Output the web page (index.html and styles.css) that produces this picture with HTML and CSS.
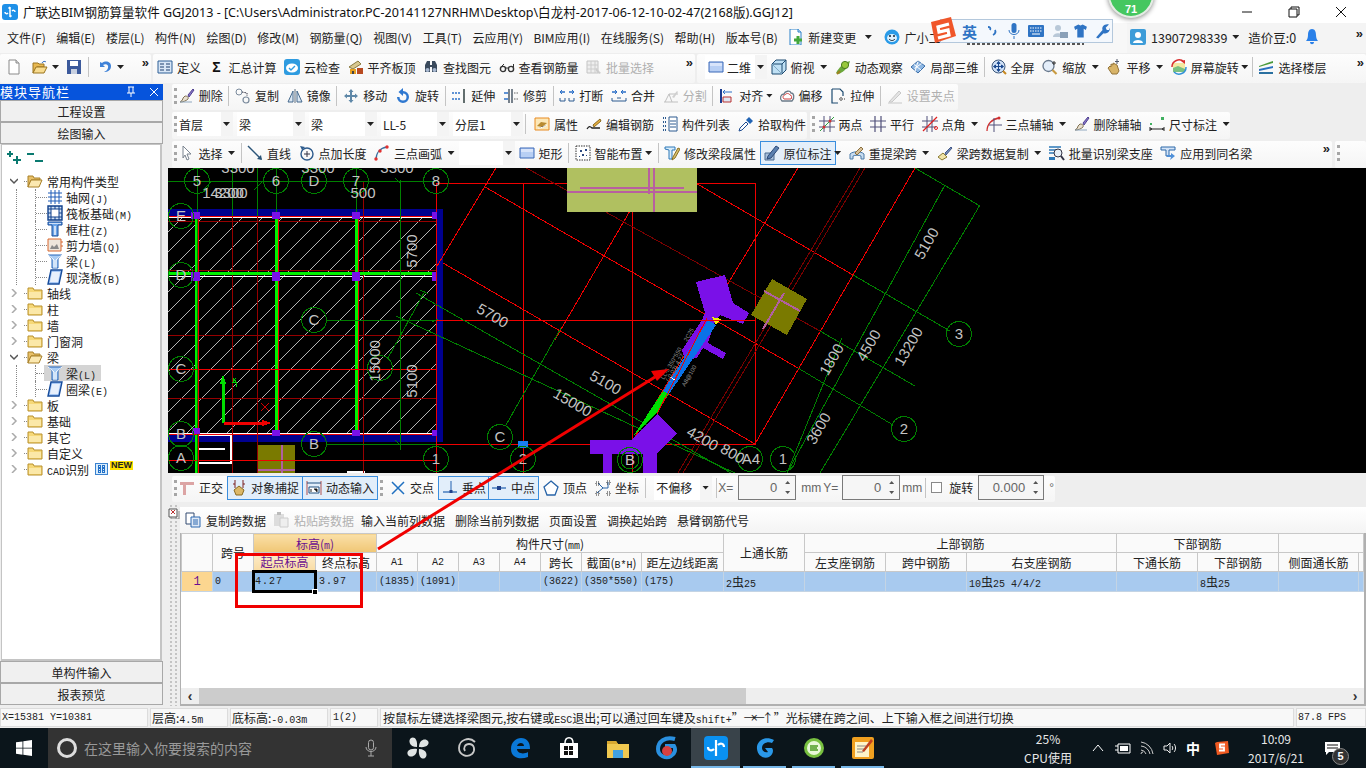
FILE: index.html
```html
<!DOCTYPE html>
<html>
<head>
<meta charset="UTF-8">
<title>广联达BIM钢筋算量软件 GGJ2013</title>
<link rel="stylesheet" href="styles.css">
</head>
<body>
<svg class="defs" xmlns="http://www.w3.org/2000/svg">
  <symbol id="new" viewBox="0 0 16 16"><path d="M3 1h7l3 3v11H3z" fill="#fff" stroke="#8a8a8a"/><path d="M10 1v3h3" fill="#ddd" stroke="#8a8a8a"/></symbol>
  <symbol id="change" viewBox="0 0 16 16"><path d="M2 0h8l3 3v13H2z" fill="#fff" stroke="#2a80c8"/><path d="M10 0v3h3" fill="#cfe4f6" stroke="#2a80c8"/><path d="M10 7v8M6 11h8" stroke="#44a83c" stroke-width="3"/></symbol>
  <symbol id="open" viewBox="0 0 16 16"><path d="M1 4h5l1 1h5v3H5L1 14z" fill="#e8b850" stroke="#9a7420"/><path d="M1 14l3-6h11l-3 6z" fill="#f8dc90" stroke="#9a7420"/><path d="M10 4c1-2 3-2 4-1" fill="none" stroke="#3a70c0"/></symbol>
  <symbol id="save" viewBox="0 0 16 16"><path d="M1 1h14v14H1z" fill="#3c5a9c"/><path d="M4 2h8v5H4z" fill="#fff"/><path d="M5 10h6v5H5z" fill="#c8d0e0"/></symbol>
  <symbol id="undo" viewBox="0 0 16 16"><path d="M3 3v5h5L6 6c3-2 6 0 5 3-.5 2-2 3-4 4 4 0 7-2 7-6C14 3 9 1 5 4z" fill="#3f82d8"/></symbol>
  <symbol id="def" viewBox="0 0 16 16"><path d="M1 2h14v12H1z" fill="#d8e6f6" stroke="#2c5f96"/><path d="M3 5h4M3 8h4M3 11h4M9 5h4M9 8h4M9 11h4" stroke="#1d3f6e"/></symbol>
  <symbol id="cloud" viewBox="0 0 16 16"><rect x="0" y="0" width="16" height="16" rx="3" fill="#2e9be0"/><ellipse cx="8" cy="9" rx="6" ry="4.5" fill="#fff"/><path d="M5 9l2 2 4-4" fill="none" stroke="#2e9be0" stroke-width="1.4"/></symbol>
  <symbol id="flush" viewBox="0 0 16 16"><path d="M1 8l9-6 3 3-8 5z" fill="#d8c890" stroke="#8a7a40"/><path d="M2 10h6v5H2z" fill="#e8a020"/><path d="M9 9h6v6H9z" fill="#b84a20"/><path d="M4 12h2v3H4z" fill="#444"/></symbol>
  <symbol id="find" viewBox="0 0 16 16"><path d="M2 6l2-4h3v4h2V2h3l2 4v7h-5V8H7v5H2z" fill="#3a4a5c"/><circle cx="4.5" cy="11" r="2" fill="#a8b8d0"/><circle cx="11.5" cy="11" r="2" fill="#a8b8d0"/></symbol>
  <symbol id="glass" viewBox="0 0 16 16"><circle cx="4" cy="10" r="2.6" fill="none" stroke="#333" stroke-width="1.4"/><circle cx="12" cy="10" r="2.6" fill="none" stroke="#333" stroke-width="1.4"/><path d="M6.5 9h3M2 8l3-3M14.5 8V5" stroke="#333"/></symbol>
  <symbol id="batch" viewBox="0 0 16 16"><path d="M1 2h11v12H1z" fill="#eee" stroke="#c4c4c4"/><path d="M1 6h11M1 10h11M5 2v12M9 2v12" stroke="#ccc"/><path d="M10 9l5 5-2 1-3-3z" fill="#ccc"/></symbol>
  <symbol id="rect" viewBox="0 0 16 16"><path d="M1 3h14v10H1z" fill="#b8cff4" stroke="#3a68b8"/><path d="M2 4h12v3H2z" fill="#d8e4fa"/></symbol>
  <symbol id="cube" viewBox="0 0 16 16"><path d="M1 5l4-4h10v10l-4 4H1z" fill="#bfe0f4" stroke="#1d4a70"/><path d="M1 5h10v10M11 5l4-4" fill="none" stroke="#1d4a70"/><path d="M1 5l10 10" stroke="#7ea8c4"/></symbol>
  <symbol id="orbit" viewBox="0 0 16 16"><path d="M1 14c3-6 8-10 14-12-1 5-5 10-11 13z" fill="#6aa83c"/><circle cx="10" cy="6" r="3.6" fill="#98c83c" stroke="#4a7a20"/><path d="M2 15l3-3" stroke="#a08020" stroke-width="2"/></symbol>
  <symbol id="local" viewBox="0 0 16 16"><path d="M1 8l7-6 7 5-7 7z" fill="#8fb8e4" stroke="#3c6ea8"/><path d="M4 5.500l7 5.500M8 2.500l-3 10M11.500 4.500l-7 5" stroke="#fff"/></symbol>
  <symbol id="full" viewBox="0 0 16 16"><circle cx="7.500" cy="7.500" r="6.500" fill="#cfe0f6" stroke="#3c587c"/><path d="M7.500 3v9M3 7.500h9M7.500 2.500l-1.500 2h3zM7.500 12.500l-1.500-2h3zM2.500 7.500l2-1.500v3zM12.500 7.500l-2-1.500v3z" stroke="#1c4a90" fill="#1c4a90"/><path d="M12 12l3 3" stroke="#c88a20" stroke-width="2"/></symbol>
  <symbol id="zoom" viewBox="0 0 16 16"><circle cx="6.500" cy="7" r="5.500" fill="#e4eefa" stroke="#68788c" stroke-width="1.300"/><path d="M10.500 11l4 4" stroke="#c89a40" stroke-width="2.200"/><path d="M12 2v4M10 4h4" stroke="#333"/></symbol>
  <symbol id="pan" viewBox="0 0 16 16"><path d="M2 9l2-2 1 1V5l2 1V4l2 1V5l2 1 1 3 1 3-2 3H6z" fill="#d8b468" stroke="#94743a"/><path d="M11 0v5M9 2.500h4" stroke="#50586a"/></symbol>
  <symbol id="screen" viewBox="0 0 16 16"><path d="M2 4h12v9H2z" fill="#f4e8a0"/><path d="M2 9l5-2 7 3v3H2z" fill="#7ac080"/><path d="M1 8a7 7 0 0 1 12-5" fill="none" stroke="#d83030" stroke-width="1.500"/><path d="M15 8a7 7 0 0 1-12 5" fill="none" stroke="#3090d8" stroke-width="1.500"/><path d="M10 2l4-1v4z" fill="#d83030"/></symbol>
  <symbol id="floor" viewBox="0 0 16 16"><path d="M1 7l14-5v2L1 8z" fill="#4a9a3c"/><path d="M1 10l14-3v2L1 12z" fill="#2a70c0"/><path d="M1 13h14v2H1z" fill="#2a70a0"/></symbol>
  <symbol id="brush" viewBox="0 0 16 16"><path d="M9 7l5-6 1 1-5 7z" fill="#8878c8" stroke="#504090"/><path d="M6 8c2 0 4 1 3 3-2 2-5 3-8 3 2-1 3-3 3-4z" fill="#e8e0d0" stroke="#807050"/><path d="M1 14h12" stroke="#90a8c0"/></symbol>
  <symbol id="copy" viewBox="0 0 16 16"><circle cx="4" cy="4" r="3" fill="none" stroke="#7a8a9c"/><circle cx="11" cy="12" r="3" fill="none" stroke="#7a8a9c" stroke-width="1.200"/><path d="M7 4l5 1v3" fill="none" stroke="#334" stroke-dasharray="1.500 1"/></symbol>
  <symbol id="mirror" viewBox="0 0 16 16"><path d="M8 1v14" stroke="#607080"/><path d="M6 3v11H1z" fill="#dce8f4" stroke="#44688c"/><path d="M10 3v11h5z" fill="#dce8f4" stroke="#44688c"/></symbol>
  <symbol id="move" viewBox="0 0 16 16"><path d="M8 1l2.500 3H9v3h3V5.500L15 8l-3 2.500V9H9v3h1.500L8 15l-2.500-3H7V9H4v1.500L1 8l3-2.500V7h3V4H5.500z" fill="#5f88a8"/></symbol>
  <symbol id="turn" viewBox="0 0 16 16"><path d="M8 3a6 6 0 1 1-6 6h2.500A3.500 3.500 0 1 0 8 5.500V8L3.500 4 8 0z" fill="#2f78d0"/></symbol>
  <symbol id="extend" viewBox="0 0 16 16"><path d="M13 1v14" stroke="#233" stroke-width="1.400"/><path d="M1 5h9M1 11h9" stroke="#2c70c8" stroke-width="1.400" stroke-dasharray="2 1"/></symbol>
  <symbol id="trim" viewBox="0 0 16 16"><path d="M6 1v14M9 1v14" stroke="#234" stroke-width="1.200"/><path d="M1 5h4M1 11h4" stroke="#2c70c8" stroke-width="1.400"/><path d="M11 5h4M11 11h4" stroke="#666" stroke-dasharray="1.500 1"/></symbol>
  <symbol id="break" viewBox="0 0 16 16"><path d="M1 4h5M10 4h5" stroke="#2c70c8" stroke-width="1.300"/><path d="M1 4l2-2M1 4l2 2M15 4l-2-2M15 4l-2 2" stroke="#2c70c8"/><path d="M1 10v3h5v-3M10 10v3h5v-3" fill="none" stroke="#2c5a90"/></symbol>
  <symbol id="merge" viewBox="0 0 16 16"><path d="M1 4h5M10 4h5" stroke="#2c70c8" stroke-width="1.300"/><path d="M6 4L4 2M6 4L4 6M10 4l2-2M10 4l2 2" stroke="#2c70c8"/><path d="M1 10v3h14v-3M6 10h4" fill="none" stroke="#2c5a90"/></symbol>
  <symbol id="split" viewBox="0 0 16 16"><path d="M1 14h14M2 14l4-8 3 8M6 6h9" fill="none" stroke="#c0c0c0"/><path d="M9 9l5-6 1 1-4 6z" fill="#d0d0d0"/></symbol>
  <symbol id="align" viewBox="0 0 16 16"><path d="M2 1v14" stroke="#1c3c90" stroke-width="2"/><path d="M4 4h9M4 4l2-2M4 4l2 2" stroke="#2c70c8"/><path d="M4 9h8v5H4z" fill="#e0e8f4" stroke="#b83030"/></symbol>
  <symbol id="offset" viewBox="0 0 16 16"><path d="M3 13c-3-3-1-7 2-7 1-3 6-4 7-1 3 0 4 5 1 8z" fill="#fff" stroke="#6a7a88" stroke-width="1.300"/><path d="M5 11c-2-2-.5-4 1-4 1-2 4-2 5 0 2 0 2 3 1 4z" fill="none" stroke="#d04040"/></symbol>
  <symbol id="stretch" viewBox="0 0 16 16"><path d="M2 1h8l3 3v4M2 1v14h6" fill="none" stroke="#1c4a70" stroke-width="1.200"/><path d="M9 11h6M11 9v4" stroke="#333" stroke-dasharray="1.500 1"/></symbol>
  <symbol id="grips" viewBox="0 0 16 16"><path d="M2 14L12 3l2 2L5 14z" fill="#e4e4e4" stroke="#c8c8c8"/><path d="M1 15h14" stroke="#c8c8c8"/></symbol>
  <symbol id="attr" viewBox="0 0 16 16"><path d="M1 2h14v12H1z" fill="#fce8b8" stroke="#e88a20"/><path d="M3 10l4-4 6 1-5 4z" fill="#b88a30"/><path d="M4 12c3 0 6-1 9-3" stroke="#fff"/></symbol>
  <symbol id="editbar" viewBox="0 0 16 16"><path d="M1 13c2-3 3-3 5-1h8" fill="none" stroke="#222" stroke-width="1.300"/><path d="M7 9l7-6 1 2-7 6z" fill="#e8b040" stroke="#8a6a20"/></symbol>
  <symbol id="list" viewBox="0 0 16 16"><path d="M1 2h3M1 6h3M1 10h3M1 14h3" stroke="#2c5a90" stroke-dasharray="1 1" stroke-width="2"/><path d="M7 1h8v14H7z" fill="#fff" stroke="#2c5a90"/><path d="M8 5h6M8 8h6M8 11h6" stroke="#2c5a90"/></symbol>
  <symbol id="pick" viewBox="0 0 16 16"><path d="M1 15l1-3 6-6 2 2-6 6z" fill="#fff" stroke="#1c4a90"/><path d="M8 4l3-3 4 4-3 3z" fill="#2264b4"/></symbol>
  <symbol id="twop" viewBox="0 0 16 16"><path d="M5 0v16M11 0v16M0 5h16M0 11h16" stroke="#50507a"/><path d="M1 15L15 1" stroke="#30a040"/><circle cx="5" cy="11" r="1.500" fill="#d03030"/><circle cx="11" cy="5" r="1.500" fill="#d03030"/></symbol>
  <symbol id="para" viewBox="0 0 16 16"><path d="M5 0v16M11 0v16M0 5h16M0 11h16" stroke="#50507a" stroke-width="1.200"/></symbol>
  <symbol id="angle" viewBox="0 0 16 16"><path d="M5 0v16M10 0v16M0 5h16M0 11h14" stroke="#50507a"/><path d="M1 15L15 1" stroke="#e02020" stroke-width="1.200"/><circle cx="14" cy="12" r="1.500" fill="none" stroke="#e02020"/></symbol>
  <symbol id="arcax" viewBox="0 0 16 16"><path d="M1 15C1 8 6 3 13 2" fill="none" stroke="#d03030" stroke-width="1.300"/><path d="M8 2v14M3 9h13" stroke="#50507a"/><circle cx="13" cy="2" r="1.500" fill="#d03030"/></symbol>
  <symbol id="dim" viewBox="0 0 16 16"><path d="M1 11v4M15 11v4M1 13h14" stroke="#222"/><path d="M1 13l2-1v2zM15 13l-2-1v2z" fill="#222"/><rect x="12" y="1" width="3" height="3" fill="#40b060"/><rect x="1" y="7" width="2" height="2" fill="#40b060"/></symbol>
  <symbol id="cursor" viewBox="0 0 16 16"><path d="M4 1l8 8H8l2 5-2 1-2-5-2 3z" fill="#fff" stroke="#7a8490"/></symbol>
  <symbol id="sline" viewBox="0 0 16 16"><path d="M1 1l13 13" stroke="#2a5478" stroke-width="1.500"/><path d="M15 15l-5-1 4-4z" fill="#2a5478"/></symbol>
  <symbol id="lenp" viewBox="0 0 16 16"><circle cx="8" cy="9" r="6" fill="none" stroke="#2c5a8c" stroke-width="1.400"/><path d="M8 6v6M5 9h6" stroke="#334"/><path d="M1 1l5 1-3 3z" fill="#2c5a8c"/></symbol>
  <symbol id="arc3" viewBox="0 0 16 16"><path d="M2 15C2 8 6 3 13 2" fill="none" stroke="#3a70a0" stroke-width="1.300"/><circle cx="2" cy="14" r="1.700" fill="#e03030"/><circle cx="6" cy="6" r="1.700" fill="#e03030"/><circle cx="13" cy="2" r="1.700" fill="#e03030"/></symbol>
  <symbol id="smart" viewBox="0 0 16 16"><path d="M1 1h14v14H1z" fill="#fff" stroke="#333" stroke-dasharray="1.500 1"/><path d="M5 5h2v2H5zM10 4h2v2h-2zM7 9h2v2H7zM4 11h1v1H4zM11 10h1v1h-1z" fill="#2c4a80"/></symbol>
  <symbol id="modi" viewBox="0 0 16 16"><path d="M1 2h10v3H8v9H5V5L1 4z" fill="#d8ecfa" stroke="#2c78b8"/><path d="M9 12l5-9 2 1-5 9-3 2z" fill="#d8c070" stroke="#8a7020"/></symbol>
  <symbol id="orig" viewBox="0 0 16 16"><path d="M1 8h9v7H1z" fill="#a8c0dc" stroke="#4a6a90"/><path d="M4 11l8-10 3 2-8 10-4 1z" fill="#5a80b0" stroke="#2c4a78"/></symbol>
  <symbol id="rext" viewBox="0 0 16 16"><path d="M1 14V9c3-3 11-3 14 0v5h-3V11c-2-1-6-1-8 0v3z" fill="#c8dcf0" stroke="#4a7aa8"/><path d="M6 8l6-6 2 2-6 6z" fill="#d8c098" stroke="#8a7040"/></symbol>
  <symbol id="span" viewBox="0 0 16 16"><path d="M1 12l5-4 4 4-5 3z" fill="#f0e4a8" stroke="#8a7a30"/><path d="M8 8l6-6 1 1-6 7z" fill="#7088b8" stroke="#445a88"/></symbol>
  <symbol id="bid" viewBox="0 0 16 16"><path d="M0 2h12M0 5h10M0 8h7" stroke="#2c78b8" stroke-width="1.300"/><path d="M0 12h6v3H0z" fill="#2c78b8"/><circle cx="9" cy="8" r="4" fill="#e8f0f8" stroke="#334"/><path d="M12 11l3 4" stroke="#334" stroke-width="2"/></symbol>
  <symbol id="apply" viewBox="0 0 16 16"><path d="M1 2h14v3H9v6H6V5L1 5z" fill="#d4e4f8" stroke="#2c68a8"/><path d="M11 8l4 3-5 4 1-3H7v-2h4z" fill="#5090d8"/></symbol>
  <symbol id="folder" viewBox="0 0 16 16"><path d="M1 3h5l1 2h8v9H1z" fill="#f6d878" stroke="#b8902c"/><path d="M2 7h12v6H2z" fill="#fbe8a8"/></symbol>
  <symbol id="fopen" viewBox="0 0 16 16"><path d="M1 3h5l1 2h6v2H4l-3 7z" fill="#e8c068" stroke="#a88028"/><path d="M1 14l3-7h11l-3 7z" fill="#fbe8b0" stroke="#a88028"/></symbol>
  <symbol id="tgrid" viewBox="0 0 16 16"><path d="M1 4h14M1 8h14M1 12h14M4 1v14M8 1v14M12 1v14" stroke="#1f5cb8"/></symbol>
  <symbol id="traft" viewBox="0 0 16 16"><path d="M1 1h14v14H1z" fill="#d0e0f4" stroke="#10408c" stroke-width="1.400"/><path d="M4 4h8v8H4z" fill="#fff" stroke="#10408c"/><path d="M1 4h3M1 8h3M1 12h3M12 4h3M12 8h3M12 12h3M4 1v3M8 1v3M12 1v3M4 12v3M8 12v3M12 12v3" stroke="#10408c"/></symbol>
  <symbol id="tcol" viewBox="0 0 16 16"><path d="M1 1h14v3h-4v11H5V4H1z" fill="#6aa4e8" stroke="#164c9c"/><path d="M2 2h12v1H2z" fill="#cfe0f8"/><path d="M7 5h2v9H7z" fill="#cfe0f8"/></symbol>
  <symbol id="twall" viewBox="0 0 16 16"><path d="M1 2h13v12H1z" fill="#eee6dc" stroke="#d86830"/><path d="M3 12l2-4 2 2 3-3 2 5z" fill="#8a8a8a"/><path d="M14 5h2M14 9h2" stroke="#d86830"/></symbol>
  <symbol id="tbeam" viewBox="0 0 16 16"><path d="M1 2h14l-4 4v9H5V6z" fill="#a8ccf4" stroke="#2464b8"/><path d="M1 2l6 5M15 2L9 7M7 7v8M9 7v8" stroke="#fff"/></symbol>
  <symbol id="tslab" viewBox="0 0 16 16"><path d="M4 1h11l-3 14H1z" fill="#a8c8f4" stroke="#164c9c" stroke-width="1.400"/><path d="M5 3h8l-2 10H3z" fill="#e8f0fc"/></symbol>
  <symbol id="ortho" viewBox="0 0 16 16"><path d="M1 2h14v3H7v10H4V5H1z" fill="#dca4a4"/></symbol>
  <symbol id="osnap" viewBox="0 0 16 16"><path d="M4 0v8M12 0v8M2 4h2M12 4h2" stroke="#7a2020"/><path d="M3 10l5-4 5 4-2 5H5z" fill="#dcb868" stroke="#8a6a20"/></symbol>
  <symbol id="dyn" viewBox="0 0 16 16"><path d="M1 1v14M15 1v14" stroke="#b05050"/><path d="M1 3h14" stroke="#205080"/><path d="M3 7h10v6H3z" fill="#fff" stroke="#205080"/><path d="M5 9v3M8 9h3v3" stroke="#222"/></symbol>
  <symbol id="cross" viewBox="0 0 16 16"><path d="M2 2l12 12M14 2L2 14" stroke="#2070c0" stroke-width="1.500"/></symbol>
  <symbol id="perp" viewBox="0 0 16 16"><path d="M1 12h14" stroke="#2060b0" stroke-width="1.200"/><path d="M9 1v11" stroke="#2060b0"/><rect x="7.500" y="10" width="3" height="3" fill="#20408c"/></symbol>
  <symbol id="midp" viewBox="0 0 16 16"><path d="M1 8h14" stroke="#2060b0" stroke-width="1.200"/><rect x="6" y="6" width="4" height="4" fill="#20408c"/></symbol>
  <symbol id="vert" viewBox="0 0 16 16"><path d="M8 1l7 6-3 8H4L1 7z" fill="#fff" stroke="#2864a8" stroke-width="1.300"/></symbol>
  <symbol id="coord" viewBox="0 0 16 16"><path d="M3 3l5 5-6 5M8 8h5v-6" fill="none" stroke="#2864a8"/><path d="M1 2h3v3H1zM12 1h3v3h-3zM1 12h3v3H1zM12 12h3v3h-3z" fill="none" stroke="#2a2a2a" stroke-dasharray="1 1"/></symbol>
  <symbol id="cpy2" viewBox="0 0 16 16"><path d="M1 1h8v11H1z" fill="#fff" stroke="#334a70"/><path d="M6 5h9v10H6z" fill="#dfe9f6" stroke="#2c68b0"/><path d="M8 8h5M8 10h5M8 12h5" stroke="#2c68b0"/></symbol>
  <symbol id="paste" viewBox="0 0 16 16"><path d="M1 2h10v12H1z" fill="#ddd"/><path d="M4 0h4v3H4z" fill="#bbb"/><path d="M7 6h8v9H7z" fill="#eee" stroke="#ccc"/></symbol>
  <symbol id="sbeam" viewBox="0 0 16 16"><path d="M1 2h14v12H1z" fill="#d8ecfc" stroke="#2070c8"/><path d="M4 3v10h3V3zM9 3v10h3V3z" fill="#2070c8"/><path d="M5 5h1M5 8h1M5 11h1M10 5h1M10 8h1M10 11h1" stroke="#fff"/></symbol>
</svg>

<div class="app">
  <div class="titlebar">
    <svg class="logo" viewBox="0 0 16 16"><rect width="16" height="16" rx="3" fill="#1e90e8"/><path d="M8 3v10M3 8c0 2 2 2 3 1M13 8c0-2-2-2-3-1M8 3l-1.500 1.500M8 13l1.500-1.500" fill="none" stroke="#fff" stroke-width="1.500"/></svg>
    <span class="apptitle">广联达BIM钢筋算量软件 GGJ2013 - [C:\Users\Administrator.PC-20141127NRHM\Desktop\白龙村-2017-06-12-10-02-47(2168版).GGJ12]</span>
    <div class="winbtns">
      <svg viewBox="0 0 12 12"><path d="M1 6h10" stroke="#111"/></svg>
      <svg viewBox="0 0 12 12"><path d="M1 3h8v8H1zM3 3V1h8v8H9" fill="none" stroke="#111"/></svg>
      <svg viewBox="0 0 12 12"><path d="M1 1l10 10M11 1L1 11" stroke="#111"/></svg>
    </div>
  </div>

  <div class="menubar">
    <div class="menus">
      <span>文件(F)</span><span>编辑(E)</span><span>楼层(L)</span><span>构件(N)</span><span>绘图(D)</span><span>修改(M)</span><span>钢筋量(Q)</span><span>视图(V)</span><span>工具(T)</span><span>云应用(Y)</span><span>BIM应用(I)</span><span>在线服务(S)</span><span>帮助(H)</span><span>版本号(B)</span>
      <span class="it"><svg class="ic"><use href="#change"/></svg>新建变更</span><i class="ar"></i>
      <span class="it xiao"><svg class="ic" viewBox="0 0 16 16"><circle cx="8" cy="8" r="7.500" fill="#2a9be8"/><ellipse cx="8" cy="9" rx="5" ry="4" fill="#dff0fc"/><circle cx="6" cy="7" r="1" fill="#123"/><circle cx="10" cy="7" r="1" fill="#123"/><path d="M5 10c2 2 4 2 6 0" fill="none" stroke="#123"/></svg>广小二</span>
    </div>
    <div class="userbox">
      <svg class="ic" viewBox="0 0 16 16"><rect width="16" height="16" rx="2" fill="#3d9cd8"/><circle cx="8" cy="6" r="3" fill="#fff"/><path d="M3 14c0-4 10-4 10 0z" fill="#fff"/></svg>
      <span class="phone">13907298339</span><i class="ar"></i><span class="beans">造价豆:0</span>
      <svg class="bell" viewBox="0 0 12 16"><path d="M6 0c3 0 4 3 4 6s1 5 2 6H0c1-1 2-3 2-6s1-6 4-6z" fill="#2a80e8"/><path d="M4 13c0 3 4 3 4 0z" fill="#2a80e8"/></svg>
      <span class="more">»</span>
    </div>
  </div>

  <div class="toolrow r1">
    <div class="panel p1a">
      <svg class="ic"><use href="#new"/></svg>
      <svg class="ic w1"><use href="#open"/></svg><i class="ar"></i>
      <svg class="ic w2"><use href="#save"/></svg><b class="sep"></b>
      <svg class="ic"><use href="#undo"/></svg><i class="ar"></i>
      <span class="more mr">»</span>
    </div>
    <div class="panel p1b">
      <span class="it"><svg class="ic"><use href="#def"/></svg>定义</span>
      <span class="it"><span class="sigma">Σ</span>汇总计算</span>
      <span class="it"><svg class="ic"><use href="#cloud"/></svg>云检查</span>
      <span class="it"><svg class="ic"><use href="#flush"/></svg>平齐板顶</span>
      <span class="it"><svg class="ic"><use href="#find"/></svg>查找图元</span>
      <span class="it"><svg class="ic"><use href="#glass"/></svg>查看钢筋量</span>
      <span class="it off"><svg class="ic"><use href="#batch"/></svg>批量选择</span>
      <span class="more mr">»</span>
    </div>
    <div class="panel p1c">
      <span class="combo c2d"><svg class="ic"><use href="#rect"/></svg>二维<i class="ar"></i></span>
      <span class="it"><svg class="ic"><use href="#cube"/></svg>俯视</span><i class="ar"></i>
      <span class="it"><svg class="ic"><use href="#orbit"/></svg>动态观察</span>
      <span class="it"><svg class="ic"><use href="#local"/></svg>局部三维</span><b class="sep"></b>
      <span class="it"><svg class="ic"><use href="#full"/></svg>全屏</span>
      <span class="it"><svg class="ic"><use href="#zoom"/></svg>缩放</span><i class="ar"></i>
      <span class="it"><svg class="ic"><use href="#pan"/></svg>平移</span><i class="ar"></i>
      <span class="it"><svg class="ic"><use href="#screen"/></svg>屏幕旋转</span><i class="ar tight tail"></i><b class="sep"></b>
      <span class="it"><svg class="ic"><use href="#floor"/></svg>选择楼层</span>
      <span class="more mr">»</span>
    </div>
  </div>

  <div class="main">
    <aside class="nav">
      <div class="navhead"><span>模块导航栏</span>
        <svg viewBox="0 0 12 12"><path d="M3 1h6M4 1v6M8 1v6M2 7h8M6 7v4" stroke="#fff" fill="none"/></svg>
        <svg viewBox="0 0 12 12"><path d="M2 2l8 8M10 2l-8 8" stroke="#fff"/></svg>
      </div>
      <div class="navbtn">工程设置</div>
      <div class="navbtn">绘图输入</div>
      <div class="tree">
        <div class="treetools">
          <svg viewBox="0 0 16 16"><path d="M3 1v6M0 4h6M10 6v8M6 10h8" stroke="#0a7a70" stroke-width="2"/></svg>
          <svg viewBox="0 0 16 16"><path d="M0 4h7M8 11h8" stroke="#0a7a70" stroke-width="2"/></svg>
        </div>
        <div class="ti"><svg class="chev" viewBox="0 0 8 8"><path d="M0 2l4 4 4-4" fill="none" stroke="#555" stroke-width="1.500"/></svg><u class="dh"></u><svg class="ic"><use href="#fopen"/></svg><span>常用构件类型</span></div>
        <div class="kids">
          <div class="ch"><u class="dh"></u><svg class="ic"><use href="#tgrid"/></svg><span>轴网<span class="m">(J)</span></span></div>
          <div class="ch"><u class="dh"></u><svg class="ic"><use href="#traft"/></svg><span>筏板基础<span class="m">(M)</span></span></div>
          <div class="ch"><u class="dh"></u><svg class="ic"><use href="#tcol"/></svg><span>框柱<span class="m">(Z)</span></span></div>
          <div class="ch"><u class="dh"></u><svg class="ic"><use href="#twall"/></svg><span>剪力墙<span class="m">(Q)</span></span></div>
          <div class="ch"><u class="dh"></u><svg class="ic"><use href="#tbeam"/></svg><span>梁<span class="m">(L)</span></span></div>
          <div class="ch"><u class="dh"></u><svg class="ic"><use href="#tslab"/></svg><span>现浇板<span class="m">(B)</span></span></div>
        </div>
        <div class="ti"><svg class="chev" viewBox="0 0 8 8"><path d="M2 0l4 4-4 4" fill="none" stroke="#aaa" stroke-width="1.500"/></svg><u class="dh"></u><svg class="ic"><use href="#folder"/></svg><span>轴线</span></div>
        <div class="ti"><svg class="chev" viewBox="0 0 8 8"><path d="M2 0l4 4-4 4" fill="none" stroke="#aaa" stroke-width="1.500"/></svg><u class="dh"></u><svg class="ic"><use href="#folder"/></svg><span>柱</span></div>
        <div class="ti"><svg class="chev" viewBox="0 0 8 8"><path d="M2 0l4 4-4 4" fill="none" stroke="#aaa" stroke-width="1.500"/></svg><u class="dh"></u><svg class="ic"><use href="#folder"/></svg><span>墙</span></div>
        <div class="ti"><svg class="chev" viewBox="0 0 8 8"><path d="M2 0l4 4-4 4" fill="none" stroke="#aaa" stroke-width="1.500"/></svg><u class="dh"></u><svg class="ic"><use href="#folder"/></svg><span>门窗洞</span></div>
        <div class="ti"><svg class="chev" viewBox="0 0 8 8"><path d="M0 2l4 4 4-4" fill="none" stroke="#555" stroke-width="1.500"/></svg><u class="dh"></u><svg class="ic"><use href="#fopen"/></svg><span>梁</span></div>
        <div class="kids">
          <div class="ch sel"><u class="dh"></u><span class="selbg"><svg class="ic"><use href="#tbeam"/></svg><span>梁<span class="m">(L)</span></span></span></div>
          <div class="ch"><u class="dh"></u><svg class="ic"><use href="#tslab"/></svg><span>圈梁<span class="m">(E)</span></span></div>
        </div>
        <div class="ti"><svg class="chev" viewBox="0 0 8 8"><path d="M2 0l4 4-4 4" fill="none" stroke="#aaa" stroke-width="1.500"/></svg><u class="dh"></u><svg class="ic"><use href="#folder"/></svg><span>板</span></div>
        <div class="ti"><svg class="chev" viewBox="0 0 8 8"><path d="M2 0l4 4-4 4" fill="none" stroke="#aaa" stroke-width="1.500"/></svg><u class="dh"></u><svg class="ic"><use href="#folder"/></svg><span>基础</span></div>
        <div class="ti"><svg class="chev" viewBox="0 0 8 8"><path d="M2 0l4 4-4 4" fill="none" stroke="#aaa" stroke-width="1.500"/></svg><u class="dh"></u><svg class="ic"><use href="#folder"/></svg><span>其它</span></div>
        <div class="ti"><svg class="chev" viewBox="0 0 8 8"><path d="M2 0l4 4-4 4" fill="none" stroke="#aaa" stroke-width="1.500"/></svg><u class="dh"></u><svg class="ic"><use href="#folder"/></svg><span>自定义</span></div>
        <div class="ti"><svg class="chev" viewBox="0 0 8 8"><path d="M2 0l4 4-4 4" fill="none" stroke="#aaa" stroke-width="1.500"/></svg><u class="dh"></u><svg class="ic"><use href="#folder"/></svg><span><span class="m">CAD</span>识别</span><svg class="ic cad"><use href="#sbeam"/></svg><em class="newtag">NEW</em></div>
      </div>
      <div class="navbtn">单构件输入</div>
      <div class="navbtn">报表预览</div>
    </aside>

    <div class="work">
      <div class="toolrow r2">
        <div class="panel p2">
          <b class="grip"></b>
          <span class="it"><svg class="ic"><use href="#brush"/></svg>删除</span><b class="sep"></b>
          <span class="it"><svg class="ic"><use href="#copy"/></svg>复制</span>
          <span class="it"><svg class="ic"><use href="#mirror"/></svg>镜像</span><b class="sep"></b>
          <span class="it"><svg class="ic"><use href="#move"/></svg>移动</span>
          <span class="it"><svg class="ic"><use href="#turn"/></svg>旋转</span><b class="sep"></b>
          <span class="it"><svg class="ic"><use href="#extend"/></svg>延伸</span>
          <span class="it"><svg class="ic"><use href="#trim"/></svg>修剪</span><b class="sep"></b>
          <span class="it"><svg class="ic"><use href="#break"/></svg>打断</span>
          <span class="it"><svg class="ic"><use href="#merge"/></svg>合并</span>
          <span class="it off"><svg class="ic"><use href="#split"/></svg>分割</span><b class="sep"></b>
          <span class="it"><svg class="ic"><use href="#align"/></svg>对齐</span><i class="ar tight tail"></i>
          <span class="it"><svg class="ic"><use href="#offset"/></svg>偏移</span>
          <span class="it"><svg class="ic"><use href="#stretch"/></svg>拉伸</span><b class="sep"></b>
          <span class="it off"><svg class="ic"><use href="#grips"/></svg>设置夹点</span>
        </div>
      </div>
      <div class="toolrow r3">
        <div class="panel p3a">
          <b class="grip"></b>
          <span class="combo w56 first">首层<i class="ar"></i></span>
          <span class="combo w68">梁<i class="ar"></i></span>
          <span class="combo w68">梁<i class="ar"></i></span>
          <span class="combo w68">LL-5<i class="ar"></i></span>
          <span class="combo w70">分层1<i class="ar"></i></span><b class="sep"></b>
          <span class="it push2"><svg class="ic"><use href="#attr"/></svg>属性</span>
          <span class="it"><svg class="ic"><use href="#editbar"/></svg>编辑钢筋</span>
          <span class="it"><svg class="ic"><use href="#list"/></svg>构件列表</span>
          <span class="it"><svg class="ic"><use href="#pick"/></svg>拾取构件</span>
        </div>
        <div class="panel p3b">
          <b class="grip"></b>
          <span class="it push2"><svg class="ic"><use href="#twop"/></svg>两点</span>
          <span class="it"><svg class="ic"><use href="#para"/></svg>平行</span>
          <span class="it"><svg class="ic"><use href="#angle"/></svg>点角</span><i class="ar"></i>
          <span class="it"><svg class="ic"><use href="#arcax"/></svg>三点辅轴</span><i class="ar"></i>
          <span class="it"><svg class="ic"><use href="#brush"/></svg>删除辅轴</span>
          <span class="it"><svg class="ic"><use href="#dim"/></svg>尺寸标注</span><i class="ar"></i>
        </div>
      </div>
      <div class="toolrow r4">
        <div class="panel p4a">
          <b class="grip"></b>
          <span class="it sel-t"><svg class="ic"><use href="#cursor"/></svg>选择</span><i class="ar"></i><b class="sep"></b>
          <span class="it"><svg class="ic"><use href="#sline"/></svg>直线</span>
          <span class="it"><svg class="ic"><use href="#lenp"/></svg>点加长度</span>
          <span class="it"><svg class="ic"><use href="#arc3"/></svg>三点画弧</span><i class="ar"></i>
          <span class="combo w56 blank"><i class="ar"></i></span>
          <span class="it"><svg class="ic"><use href="#rect"/></svg>矩形</span><b class="sep"></b>
          <span class="it"><svg class="ic"><use href="#smart"/></svg>智能布置</span><i class="ar tight"></i><b class="sep"></b>
          <span class="it"><svg class="ic"><use href="#modi"/></svg>修改梁段属性</span>
          <span class="it active"><svg class="ic"><use href="#orig"/></svg>原位标注</span><i class="ar tight"></i>
          <span class="it"><svg class="ic"><use href="#rext"/></svg>重提梁跨</span><i class="ar"></i>
          <span class="it"><svg class="ic"><use href="#span"/></svg>梁跨数据复制</span><i class="ar"></i>
          <span class="it"><svg class="ic"><use href="#bid"/></svg>批量识别梁支座</span>
          <span class="it"><svg class="ic"><use href="#apply"/></svg>应用到同名梁</span>
          <span class="more mr">»</span>
        </div>
        <div class="panel p4b"><b class="grip"></b></div>
      </div>

      <svg class="cad" viewBox="168 168 1198 305" xmlns="http://www.w3.org/2000/svg">
        <defs>
          <pattern id="hatch" width="20" height="20" patternUnits="userSpaceOnUse">
            <path d="M0 20L20 0" stroke="#b4b4b4" stroke-width="1"/>
          </pattern>
        </defs>
        <rect x="168" y="168" width="1198" height="305" fill="#000"/>

        <!-- plan on the left -->
        <path d="M168 209h275v233H168v-9h268V216H168z" fill="#00008f"/>
        <rect x="168" y="217" width="268" height="216" fill="url(#hatch)"/>
        <rect x="258" y="445" width="37" height="28" fill="#7a7a00"/>
        <path d="M258 470h37M282 445v28" stroke="#b060a0" stroke-width="2"/>
        <path d="M198 435h33v28h-33zM198 449h27" fill="none" stroke="#fff" stroke-width="1.500"/>
        <path d="M347 472h18" stroke="#fff" stroke-width="2"/>
        <path d="M168 217h268v216H168M168 276h268" fill="none" stroke="#fff"/>

        <g stroke="#960000" fill="none">
          <path d="M168 221h268M168 270h268M168 335h268M168 398h268M232 216v257M257 216v257M363 181v292"/>
        </g>
        <path d="M232 168v48M257 168v48" stroke="#008000"/>
        <g stroke="#00f000" stroke-width="3" fill="none">
          <path d="M196 217v256M276 217v216M356 217v216M168 273h268"/>
        </g>
        <g stroke="#f00000" fill="none">
          <path d="M198 217v256M278 217v216M358 217v216M168 216h268M168 434h268M168 369h268"/>
          <path d="M436 183v290M436 183h319v261H327M436 320h319M523 183v290M632 212v261"/>
          <path d="M436 268l60-100M485 187l313 181M443 263l312 181M670 168l183 107M655 168l-95 163-5 9M798 168L630 445M915 168L755 444"/>
          <path d="M168 460h268"/>
        </g>
        <g stroke="#7a0000" fill="none">
          <path d="M485 145l335 186M865 168L683 473M860 168L678 473"/>
        </g>
        <g stroke="#008000" fill="none">
          <path d="M168 181h268M197 168v305M276 168v50M356 168v50M400 180v270M327 320h109M327 444h109"/>
          <path d="M396 316l339 157M416 293l315 180M425 291l-37 67M561 328l-55 97"/>
          <path d="M915 168l65 38M853 275l97 56M798 368l95 57M820 331l95 55M945 185L787 473M980 205L820 473M842 338l-55 135"/>
          <path d="M203 190l8-8M254 190l8-8M395 178l6 6M395 440l6 6M420 290l8 4M432 322l6-3"/>
        </g>
        <g fill="#7a10e8">
          <rect x="191" y="212" width="9" height="7"/><rect x="272" y="212" width="8" height="7"/><rect x="352" y="212" width="8" height="7"/><rect x="432" y="212" width="5" height="7"/>
          <rect x="191" y="272" width="9" height="9"/><rect x="272" y="272" width="8" height="9"/><rect x="352" y="272" width="8" height="9"/><rect x="432" y="272" width="4" height="9"/>
          <rect x="192" y="428" width="8" height="6"/><rect x="272" y="430" width="8" height="6"/><rect x="352" y="430" width="8" height="6"/><rect x="432" y="430" width="5" height="6"/>
        </g>
        <rect x="518" y="441" width="10" height="7" fill="#1a7ef0"/>
        <path d="M223 423v-40" stroke="#00e000" stroke-width="3"/><path d="M223 374l-3 10h6z" fill="#00e000"/>
        <path d="M224 423h40" stroke="#f00000" stroke-width="3"/><path d="M272 423l-10-3v6z" fill="#f00000"/>
        <path d="M236 378l-3 4 4 0M233 378l3 4v5" stroke="#00d000" fill="none"/>
        <path d="M261 403l8 8M269 403l-8 8" stroke="#d00000"/>

        <!-- beam on the right -->
        <rect x="567" y="168" width="130" height="44" fill="#b0c060"/>
        <path d="M567 192h130M580 188h104M654 168v44M649 168v26" stroke="#b860a0" stroke-width="2" fill="none"/>
        <path d="M772 279l35 20-20 36-36-20z" fill="#7a7a00"/>
        <path d="M764 291l36 20M784 293l-21 36" stroke="#b060a0" stroke-width="2" fill="none"/>
        <path d="M696 282l29-7 8 28 16 10-6 11-23-9-5 7-7 21 18 10-3 6-20-11-6 10-12 2-3-10 20-30 3-7z" fill="#7a10e8"/>
        <path d="M657 414l20 20-20 19v20h-14v-19h-31v19h-9v-19h-13v-14h42z" fill="#7a10e8"/>
        <path d="M708 320l8 5-47 69-6-3z" fill="#0a72e8"/>
        <path d="M663 391l6 3-13 20-22 21z" fill="#00e000"/>
        <path d="M712 317l9 2-5 6z" fill="#f0f000"/>
        <g stroke="#f00000" fill="none"><path d="M560 320h195M707 318l-50 96"/></g>
        <path d="M670 377l5 3" stroke="#fff"/>
        <g fill="#8c8c8c" font-family="Liberation Sans" font-size="6">
          <text transform="translate(664 380) rotate(-60)">LL-5 350*550</text>
          <text transform="translate(669 382) rotate(-60)">(-0.03) 4.27</text>
          <text transform="translate(687 342) rotate(-60)">2C25</text>
          <text transform="translate(685 387) rotate(-60)">A8@100</text>
        </g>

        <!-- axis bubbles -->
        <g fill="none" stroke="#008000">
          <circle cx="197" cy="181" r="12.500"/><circle cx="276" cy="181" r="12.500"/><circle cx="314" cy="181" r="12.500"/><circle cx="356" cy="181" r="12.500"/><circle cx="436" cy="181" r="12.500"/>
          <circle cx="181" cy="216" r="12.500"/><circle cx="181" cy="275" r="12.500"/><circle cx="314" cy="320" r="12.500"/><circle cx="181" cy="369" r="12.500"/><circle cx="181" cy="434" r="12.500"/><circle cx="314" cy="444" r="12.500"/><circle cx="181" cy="458" r="12.500"/>
          <circle cx="380" cy="368" r="12.500"/><circle cx="500" cy="437" r="12.500"/><circle cx="523" cy="459" r="12.500"/><circle cx="436" cy="459" r="12.500"/>
          <circle cx="630" cy="460" r="12.500"/><circle cx="630" cy="460" r="9"/><circle cx="750" cy="459" r="12.500"/><circle cx="783" cy="459" r="12.500"/><circle cx="904" cy="429" r="12.500"/><circle cx="959" cy="334" r="12.500"/>
        </g>
        <g class="cadtext" fill="#c4c4c4" font-family="Liberation Sans" font-size="15" text-anchor="middle">
          <text x="197" y="186">5</text><text x="276" y="186">6</text><text x="314" y="186">D</text><text x="356" y="186">7</text><text x="436" y="186">8</text>
          <text x="181" y="221">E</text><text x="181" y="280">D</text><text x="314" y="325">C</text><text x="181" y="374">C</text><text x="181" y="439">B</text><text x="314" y="449">B</text><text x="181" y="463">A</text>
          <text x="500" y="442">C</text><text x="523" y="464">2</text><text x="436" y="464">1</text><text x="630" y="465">B</text><text x="751" y="464">A4</text><text x="783" y="464">1</text><text x="904" y="434">2</text><text x="959" y="339">3</text>
          <text x="238" y="173">3300</text><text x="318" y="173">3300</text><text x="397" y="173">3300</text>
          <text x="223" y="198">14200</text><text x="231" y="198">3300</text><text x="363" y="198">500</text>
          <text transform="translate(417 251) rotate(-90)">5700</text>
          <text transform="translate(380 361) rotate(-90)">15000</text>
          <text transform="translate(417 381) rotate(-90)">5100</text>
          <text transform="translate(490 320) rotate(30)">5700</text>
          <text transform="translate(570 407) rotate(30)">15000</text>
          <text transform="translate(603 387) rotate(30)">5100</text>
          <text transform="translate(700 443) rotate(30)">4200</text>
          <text transform="translate(730 458) rotate(30)">800</text>
          <text transform="translate(931 246) rotate(-60)">5100</text>
          <text transform="translate(873 348) rotate(-60)">4500</text>
          <text transform="translate(913 349) rotate(-60)">13200</text>
          <text transform="translate(836 362) rotate(-60)">1800</text>
          <text transform="translate(823 431) rotate(-60)">3600</text>
        </g>
      </svg>

      <div class="snapbar">
        <div class="panel psnap">
          <b class="grip"></b>
          <span class="it"><svg class="ic"><use href="#ortho"/></svg>正交</span>
          <span class="it on on1"><svg class="ic"><use href="#osnap"/></svg>对象捕捉</span>
          <span class="it on on2"><svg class="ic"><use href="#dyn"/></svg>动态输入</span>
          <b class="grip g2"></b>
          <span class="it"><svg class="ic"><use href="#cross"/></svg>交点</span>
          <span class="it on on3"><svg class="ic"><use href="#perp"/></svg>垂点</span>
          <span class="it on on4"><svg class="ic"><use href="#midp"/></svg>中点</span>
          <span class="it"><svg class="ic"><use href="#vert"/></svg>顶点</span>
          <span class="it"><svg class="ic"><use href="#coord"/></svg>坐标</span><b class="sep"></b>
          <span class="combo noff">不偏移<i class="ar"></i></span><b class="sep s5"></b>
          <span class="lab lx">X=</span><span class="spin s58 first-spin"><span>0</span><i class="arrows"></i></span><span class="lab">mm</span>
          <span class="lab ly">Y=</span><span class="spin s58"><span>0</span><i class="arrows"></i></span><span class="lab">mm</span><b class="sep s4"></b>
          <i class="check"></i><span class="rot">旋转</span><span class="spin s66"><span>0.000</span><i class="arrows"></i></span><span class="lab">°</span>
        </div>
      </div>

      <div class="beampanel">
        <div class="dots">
          <svg viewBox="0 0 12 12"><path d="M1 2h8v8H1z" fill="#fff" stroke="#555"/><path d="M3 3l4 4M7 3L3 7" stroke="#b33"/><path d="M11 4v8H3" stroke="#888" fill="none"/></svg>
        </div>
        <div class="beamright">
          <div class="gridbar">
            <span class="it"><svg class="ic"><use href="#cpy2"/></svg>复制跨数据</span>
            <span class="it off"><svg class="ic"><use href="#paste"/></svg>粘贴跨数据</span>
            <span class="cmd">输入当前列数据</span>
            <span class="cmd">删除当前列数据</span>
            <span class="cmd">页面设置</span>
            <span class="cmd">调换起始跨</span>
            <span class="cmd">悬臂钢筋代号</span>
          </div>
          <div class="gridbox">
            <div class="gridscroll">
              <table class="grid">
                <colgroup>
                  <col class="c31"><col class="c41"><col class="c62"><col class="c61">
                  <col class="c41"><col class="c41"><col class="c41"><col class="c41"><col class="c41"><col class="c60"><col class="c82">
                  <col class="c81"><col class="c81"><col class="c81"><col class="c150"><col class="c81"><col class="c81"><col class="c80"><col>
                </colgroup>
                <tr>
                  <th rowspan="2"></th><th rowspan="2">跨号</th><th colspan="2" class="hot">标高(<span class="m">m</span>)</th>
                  <th colspan="7">构件尺寸(<span class="m">mm</span>)</th><th rowspan="2">上通长筋</th>
                  <th colspan="3">上部钢筋</th><th colspan="2">下部钢筋</th><th colspan="2"></th>
                </tr>
                <tr>
                  <th class="hotsub">起点标高</th><th>终点标高</th>
                  <th class="m">A1</th><th class="m">A2</th><th class="m">A3</th><th class="m">A4</th><th>跨长</th><th>截面(<span class="m">B*H</span>)</th><th>距左边线距离</th>
                  <th>左支座钢筋</th><th>跨中钢筋</th><th>右支座钢筋</th><th>下通长筋</th><th>下部钢筋</th><th>侧面通长筋</th><th></th>
                </tr>
                <tr class="data">
                  <td class="rowno">1</td><td class="m">0</td><td class="m cur"><span>4.27</span></td><td class="m wide">3.97</td>
                  <td class="m">(1835)</td><td class="m">(1091)</td><td></td><td></td><td class="m">(3622)</td><td class="m">(350*550)</td><td class="m">(175)</td>
                  <td><span class="m">2</span>虫<span class="m">25</span></td><td></td><td></td><td><span class="m">10</span>虫<span class="m">25 4/4/2</span></td><td></td><td><span class="m">8</span>虫<span class="m">25</span></td><td></td><td></td>
                </tr>
              </table>
            </div>
            <div class="hscroll">
              <span class="sa">‹</span><span class="thumb"></span><span class="sa right">›</span>
            </div>
          </div>
        </div>
      </div>
    </div>
  </div>

  <div class="status">
    <span class="sb s1 m">X=15381 Y=10381</span>
    <span class="sb s2">层高:<span class="m">4.5m</span></span>
    <span class="sb s3">底标高:<span class="m">-0.03m</span></span>
    <span class="sb s4b m">1(2)</span>
    <span class="sb s5b">按鼠标左键选择梁图元,按右键或<span class="m">ESC</span>退出;可以通过回车键及<span class="m">shift+</span>”<span class="arw">→←↑</span>”光标键在跨之间、上下输入框之间进行切换</span>
    <span class="sb s6 m">87.8 FPS</span>
  </div>

  <div class="taskbar">
    <svg class="winlogo" viewBox="0 0 16 16"><path d="M0 2.300l6.500-.9v6.300H0zM7.300 1.300L16 0v7.700H7.300zM0 8.500h6.500v6.200L0 13.800zM7.300 8.500H16V16l-8.700-1.200z" fill="#fff"/></svg>
    <div class="search"><i class="cortana"></i><span>在这里输入你要搜索的内容</span>
      <svg viewBox="0 0 12 18"><rect x="3.500" y="1" width="5" height="10" rx="2.500" fill="none" stroke="#aaa"/><path d="M1 8c0 6 10 6 10 0M6 13v4M3 17h6" fill="none" stroke="#aaa"/></svg>
    </div>
    <div class="tasks">
      <span class="task"><svg viewBox="0 0 24 24"><path d="M11 11C3 11 2 4 5 2c3-2 7 1 6 9zM13 11c0-8 7-9 9-6 2 3-1 7-9 6zM13 13c8 0 9 7 6 9-3 2-7-1-6-9zM11 13c0 8-7 9-9 6-2-3 1-7 9-6z" fill="#e0e4e4"/></svg></span>
      <span class="task"><svg viewBox="0 0 24 24"><path d="M20 6C14 0 4 4 4 12c0 7 8 10 13 6 4-4 2-10-3-10-4 0-6 4-4 7" fill="none" stroke="#c8c8c8" stroke-width="1.800"/></svg></span>
      <span class="task t-edge"><svg viewBox="0 0 24 24"><path d="M3 13C3 6 8 2 13 2c6 0 9 4 9 11H9c0 4 6 6 11 3v5c-8 3-17 1-17-8zm6-3h7c0-4-6-4-7 0z" fill="#0a78d8"/></svg></span>
      <span class="task"><svg viewBox="0 0 24 24"><path d="M3 7h18v15H3z" fill="#fff"/><path d="M8 7c0-7 8-7 8 0" fill="none" stroke="#fff" stroke-width="1.500"/><path d="M7 10h4v4H7zM12 10h4v4h-4zM7 15h4v4H7zM12 15h4v4h-4z" fill="#111"/></svg></span>
      <span class="task"><svg viewBox="0 0 24 24"><path d="M1 5h9l2 3h11v14H1z" fill="#f0c850"/><path d="M7 14h10v8H7z" fill="#40a0e0"/><path d="M1 5h9l2 3H1z" fill="#d8a830"/></svg></span>
      <span class="task"><svg viewBox="0 0 24 24"><path d="M20 3C10 0 3 6 3 13c0 7 8 10 13 7 4-2 5-7 3-10h-7v4h3" fill="none" stroke="#2a90e0" stroke-width="4"/><circle cx="12" cy="15" r="5" fill="#d84040"/></svg></span>
      <span class="task current under"><svg viewBox="0 0 24 24"><rect width="24" height="24" rx="4" fill="#0a90f0"/><path d="M12 4v16M4 11c0 4 4 4 6 2M20 11c0-4-4-4-6-2" fill="none" stroke="#fff" stroke-width="2.200"/></svg></span>
      <span class="task under"><svg viewBox="0 0 24 24"><path d="M21 4C12-1 3 5 4 13c1 8 8 10 12 8 4-2 5-7 3-9h-7l3 4c-3 1-6-1-6-4 0-5 6-7 10-5z" fill="#2a98e8"/></svg></span>
      <span class="task under"><svg viewBox="0 0 24 24"><circle cx="12" cy="12" r="10" fill="#78c040"/><circle cx="12" cy="12" r="7" fill="#e8f8d8"/><path d="M8 10h8M8 14h8M8 12h7" stroke="#4a9a20" stroke-width="1.500"/></svg></span>
      <span class="task under"><svg viewBox="0 0 24 24"><rect x="1" y="1" width="22" height="22" rx="2" fill="#f0a020"/><path d="M4 6h14v15H4z" fill="#fff4c8"/><path d="M6 10h9M6 13h9M6 16h6" stroke="#888"/><path d="M11 15l9-12 2 2-9 11z" fill="#c04020"/></svg></span>
    </div>
    <div class="tray">
      <div class="cpu"><span>25%</span><span>CPU使用</span></div>
      <svg class="t1" viewBox="0 0 12 8"><path d="M1 7l5-6 5 6" fill="none" stroke="#fff"/></svg>
      <svg class="t2" viewBox="0 0 16 12"><path d="M3 2h12v9H3z" fill="none" stroke="#fff"/><path d="M5 4h8v5H5z" fill="#fff"/><path d="M0 4h3M0 8h3" stroke="#fff"/></svg>
      <svg class="t3" viewBox="0 0 14 14"><path d="M1 13a2 2 0 0 1 2-2M1 9a6 6 0 0 1 5 4M1 5a10 10 0 0 1 9 8M1 1a14 14 0 0 1 12 12" fill="none" stroke="#ccc"/></svg>
      <svg class="t4" viewBox="0 0 14 14"><path d="M1 5h3l3-3v10L4 9H1z" fill="none" stroke="#eee"/><path d="M9 5c1 1 1 3 0 4M11 3c2 2 2 6 0 8" fill="none" stroke="#eee"/></svg>
      <span class="ime">中</span>
      <svg class="t5" viewBox="0 0 16 16"><path d="M3 2l11-1 1 12-12 2-2-12z" fill="#f05a22"/><path d="M11 4.500H6v3h4v3H5" fill="none" stroke="#fff" stroke-width="1.800"/></svg>
      <div class="clock"><span>10:09</span><span>2017/6/21</span></div>
      <div class="notify"><svg viewBox="0 0 16 16"><path d="M0 1h15v10H4l-3 3v-3H0z" fill="#fff"/><path d="M2 4h11M2 7h11" stroke="#111"/></svg><em>5</em></div>
    </div>
  </div>

  <!-- things floating over the window -->
  <div class="bubble">71</div>
  <div class="imebar">
    <svg class="slogo" viewBox="0 0 28 28"><path d="M2 6l20-5 5 19-21 7z" fill="#f0562a"/><path d="M20 8L9 11l1 5 9-2 1 5-11 3" fill="none" stroke="#fff" stroke-width="3.200"/></svg>
    <span class="ying">英</span>
    <svg class="i1" viewBox="0 0 12 12"><path d="M2 2c2 0 3 1 2 3M9 5c1 2 0 4-2 5" fill="none" stroke="#2f74c4" stroke-width="1.800"/></svg>
    <svg class="i2" viewBox="0 0 12 16"><rect x="3.500" y="0" width="5" height="10" rx="2.500" fill="#2f74c4"/><path d="M1 7c0 6 10 6 10 0M6 13v3" fill="none" stroke="#2f74c4"/></svg>
    <svg class="i3" viewBox="0 0 16 12"><rect width="16" height="12" rx="1" fill="#2f74c4"/><path d="M2 3h12M2 6h12" stroke="#fff" stroke-dasharray="1.500 1"/><path d="M4 9h8" stroke="#fff"/></svg>
    <svg class="i4" viewBox="0 0 16 14"><circle cx="6" cy="4" r="3" fill="#b8c8d8"/><path d="M1 13c0-5 10-5 10 0z" fill="#b8c8d8"/><rect x="8" y="8" width="8" height="6" fill="#8aa0b8"/></svg>
    <svg class="i5" viewBox="0 0 14 14"><path d="M1 3l4-2c1 1 3 1 4 0l4 2-1 3-2-1v8H4V5L2 6z" fill="#2f74c4"/></svg>
    <svg class="i6" viewBox="0 0 14 14"><path d="M1 13l6-7c-1-3 2-6 6-5l-3 3 1 2 2 0 1-2c0 4-3 6-6 5l-5 5z" fill="#2f74c4"/></svg>
  </div>
  <svg class="overlay" viewBox="0 0 1366 768" xmlns="http://www.w3.org/2000/svg">
    <rect x="236.500" y="554.500" width="125" height="52" fill="none" stroke="#f00000" stroke-width="3"/>
    <path d="M378 549L655 377" stroke="#f00000" stroke-width="3"/>
    <path d="M669 369l-18 2 6 10z" fill="#f00000"/>
    <rect x="312.500" y="589.500" width="5" height="5" fill="#000" stroke="#fff" stroke-width="1"/>
  </svg>
</div>
</body>
</html>
```
FILE: styles.css
```css
* { box-sizing: border-box; }

html, body {
	margin: 0;
	padding: 0;
}

body {
	font-family: "Noto Sans CJK SC", "Liberation Sans", sans-serif;
	font-size: 12px;
	color: #222;
	background: #eee;
}

.defs {
	position: absolute;
	width: 0;
	height: 0;
}

.app {
	position: relative;
	width: 1366px;
	height: 768px;
	overflow: hidden;
	display: flex;
	flex-direction: column;
	background: #eee;
}

.ic {
	width: 16px;
	height: 16px;
	flex: none;
}

.m {
	font-family: "Liberation Mono", monospace;
	font-size: 10px;
}

/* title bar */
.titlebar {
	height: 23px;
	background: #fff;
	display: flex;
	align-items: center;
	padding-left: 2px;
}

.logo {
	width: 16px;
	height: 16px;
	margin-right: 5px;
}

.apptitle {
	font-family: "Noto Sans", "Noto Sans CJK SC", sans-serif;
	font-size: 12.55px;
	color: #111;
	white-space: nowrap;
}

.winbtns {
	margin-left: auto;
	display: flex;
	gap: 35px;
	padding-right: 19px;
}

.winbtns svg {
	width: 12px;
	height: 12px;
}

/* menu */
.menubar {
	height: 30px;
	display: flex;
	align-items: center;
	background: #f7f7f7;
	position: relative;
	padding-bottom: 2px;
}

.menus {
	display: flex;
	align-items: center;
	gap: 10.5px;
	padding-left: 7px;
	white-space: nowrap;
}

.xiao {
	margin-left: 2px;
}

.userbox {
	position: absolute;
	left: 1127px;
	right: 0;
	top: 0;
	bottom: 0;
	display: flex;
	align-items: center;
	padding-left: 3px;
	padding-bottom: 2px;
	background: #f4f4f4;
}

.phone {
	font-size: 12.5px;
	margin-left: 5px;
	margin-right: 7px;
}

.beans {
	margin-left: 9px;
	font-size: 12.5px;
}

.bell {
	width: 12px;
	height: 16px;
	margin-left: 10px;
}

.userbox .more {
	margin-left: auto;
	margin-right: 3px;
	margin-top: -8px;
}

/* tool rows */
.toolrow {
	display: flex;
	gap: 3px;
}

.r1 { height: 31px; padding-top: 1px; padding-bottom: 1px; gap: 2px; }
.r2 { height: 27px; padding-left: 4px; padding-bottom: 1px; }
.r3 { height: 29px; padding-left: 4px; padding-top: 1px; padding-bottom: 1px; }
.r4 { height: 28px; padding-left: 4px; padding-top: 1px; padding-bottom: 0; }

.panel {
	display: flex;
	align-items: center;
	gap: 8px;
	background: linear-gradient(#fdfdfd, #f5f5f5);
	border-radius: 2px;
	white-space: nowrap;
	padding-left: 1px;
	padding-bottom: 3px;
	position: relative;
}

.p1a { width: 151px; padding-left: 6px; gap: 0; }
.p1a .w1 { margin-left: 10px; }
.p1a .w2 { margin-left: 7px; }
.p1a .sep { margin: 0 8px 0 6px; }
.p1a .ar { margin-left: 4px; }
.p1b { width: 542px; padding-left: 4px; gap: 7.5px; }
.p1c { flex: 1; padding-left: 0; gap: 7.6px; }
.p2 { width: 786px; gap: 7.7px; }
.p3a { width: 635px; }
.p3b { width: 420px; gap: 7.5px; }
.p4a { width: 1160px; gap: 7.5px; }
.p4b { flex: 1; }

.it {
	display: inline-flex;
	align-items: center;
	gap: 4px;
	flex: none;
}

.push2 {
	margin-left: 2px;
}

.off {
	color: #b0b0b0;
}

.sigma {
	width: 16px;
	text-align: center;
	font: bold 14px "Liberation Sans", sans-serif;
	color: #111;
}

.ar {
	display: inline-block;
	flex: none;
	width: 7px;
	height: 4px;
	margin-left: -2px;
	background: #222;
	clip-path: polygon(0 0, 100% 0, 50% 100%);
}

.ar.tight {
	margin-left: -5px;
}

.ar.tail {
	margin-right: -2px;
}

.sep {
	flex: none;
	width: 1px;
	height: 20px;
	background: #c4c4c4;
	margin: 0 -2px;
}

.grip {
	flex: none;
	width: 3px;
	height: 16px;
	margin-left: 1px;
	margin-right: -6px;
	border-left: 3px dotted #a6a6a6;
}

.more {
	font: 13px/1 "Liberation Sans", sans-serif;
	font-weight: bold;
	color: #222;
}

.more.mr {
	margin-left: auto;
	margin-right: 2px;
	margin-top: -10px;
}

.combo {
	display: inline-flex;
	align-items: center;
	flex: none;
	height: 24px;
	background: #fff;
	position: relative;
	padding-left: 2px;
	margin-right: -4px;
}

.combo .ar {
	position: absolute;
	right: 3px;
	top: 10px;
	margin: 0;
	z-index: 1;
}

.combo::after {
	content: "";
	position: absolute;
	right: 0;
	top: 0;
	bottom: 0;
	width: 12px;
	background: #f4f4f4;
	z-index: 0;
}

.w56 { width: 56px; }
.w68 { width: 68px; }
.w70 { width: 70px; }
.first { margin-left: -2px; }
.blank { margin-left: -3px; }

.c2d {
	width: 62px;
	gap: 3px;
	padding-left: 3px;
	margin-left: 8px;
	margin-right: -4px;
}

.it.active {
	height: 24px;
	padding: 0 3px;
	background: #e4effa;
	border: 1px solid #3a8ede;
	margin: 0 -4px 0 -4px;
}

/* left navigation */
.main {
	flex: none;
	height: 624px;
	display: flex;
}

.nav {
	width: 163px;
	flex: none;
	display: flex;
	flex-direction: column;
	margin-right: 5px;
	padding-bottom: 3px;
}

.navhead {
	height: 16px;
	background: #0654dc;
	color: #fff;
	display: flex;
	align-items: center;
	gap: 8px;
	font-size: 13px;
	line-height: 16px;
	letter-spacing: 1px;
}

.navhead span {
	margin-right: auto;
}

.navhead svg {
	width: 12px;
	height: 12px;
	margin-right: 3px;
}

.navbtn {
	flex: none;
	height: 22px;
	background: #f0f0f0;
	border: 1px solid #a8a8a8;
	text-align: center;
	line-height: 21px;
	color: #222;
}

.tree {
	flex: 1;
	background: #fff;
	border: 2px solid #c4c4c4;
	border-top-width: 1px;
	border-left-width: 1px;
	margin: 0 1px;
	font-size: 12px;
}

.treetools {
	height: 28px;
	padding: 5px 0 0 5px;
	display: flex;
	gap: 4px;
}

.treetools svg {
	width: 16px;
	height: 16px;
}

.ti, .ch {
	height: 16px;
	display: flex;
	align-items: center;
	white-space: nowrap;
}

.ti {
	padding-left: 8px;
}

.chev {
	width: 8px;
	height: 8px;
	flex: none;
	margin-right: 6px;
}

.dh {
	flex: none;
	width: 3px;
	border-top: 1px dotted #888;
	text-decoration: none;
}

.ti .ic {
	margin-right: 4px;
}

.kids {
	margin-left: 14px;
	border-left: 1px dotted #888;
}

.ch {
	margin-left: 18px;
	border-left: 1px dotted #888;
}

.ch .dh {
	width: 11px;
}

.ch .ic {
	margin-right: 3px;
}

.ch.sel .dh {
	width: 8px;
}

.selbg {
	display: flex;
	align-items: center;
	width: 57px;
	height: 16px;
	padding-left: 3px;
	background: #d4d4d4;
}

.ti .cad {
	width: 15px;
	height: 14px;
	margin-left: 5px;
	margin-right: 1px;
}

.newtag {
	font: bold 9px/9px "Liberation Sans", sans-serif;
	background: #ffe000;
	color: #222;
	margin-top: -7px;
	padding: 0 1px;
	font-style: normal;
}

/* work area */
.work {
	flex: 1;
	min-width: 0;
	display: flex;
	flex-direction: column;
}

.cad {
	display: block;
	flex: none;
	width: 1198px;
	height: 305px;
	shape-rendering: crispEdges;
}

.snapbar {
	flex: none;
	height: 31px;
	padding: 3px 0 2px 4px;
	display: flex;
}

.psnap {
	width: 883px;
	gap: 8px;
}

.on {
	height: 24px;
	background: #e2eefa;
	border: 1px solid #3a8ede;
	padding: 0 3px;
	margin-left: -4px;
}

.on2 {
	margin-left: -9px;
}

.on4 {
	margin-left: -9px;
	margin-right: -4px;
	padding-left: 2px;
}

.on3 { padding-right: 2px; }

.g2 { margin-right: -1px; margin-left: -6px; }

.noff {
	width: 58px;
	margin-left: 2px;
	padding-left: 2px;
}

.noff + .sep { margin-left: 3px; margin-right: -5px; }

.lab {
	color: #666;
	font: 12px "Liberation Sans", sans-serif;
	margin-right: -6px;
}

.lx { margin-right: -3px; }
.ly { margin-right: -4px; }

.spin {
	display: inline-flex;
	align-items: center;
	justify-content: flex-end;
	flex: none;
	height: 25px;
	background: #f6f6f6;
	border: 1px solid #7a7a7a;
	color: #666;
	padding-right: 18px;
	font: 13px "Liberation Sans", sans-serif;
	position: relative;
	margin-right: -6px;
}

.first-spin { margin-right: -3px; }

.arrows {
	position: absolute;
	right: 4px;
	top: 5px;
	width: 7px;
	height: 13px;
}

.arrows::before, .arrows::after {
	content: "";
	position: absolute;
	left: 1px;
	width: 5px;
	height: 3px;
	background: #555;
}

.arrows::before {
	top: 0;
	clip-path: polygon(50% 0, 100% 100%, 0 100%);
}

.arrows::after {
	bottom: 0;
	clip-path: polygon(0 0, 100% 0, 50% 100%);
}

.s58 { width: 58px; }
.s66 { width: 66px; }

.sep.s4 { margin: 0 -3px 0 1px; }
.sep.s5 { margin: 0 -7px 0 0; }

.check {
	flex: none;
	width: 11px;
	height: 11px;
	background: #fff;
	border: 1px solid #8a8a8a;
}

.rot {
	margin-left: -1px;
	margin-right: -3px;
}

.rot + .spin + .lab {
	margin-left: 3px;
}

/* beam table */
.beampanel {
	flex: 1;
	display: flex;
	min-height: 0;
	padding-bottom: 2px;
}

.dots {
	flex: none;
	width: 12px;
	padding-top: 3px;
	background:
		radial-gradient(#c4c4c4 1px, transparent 1.500px) 1px 16px / 4px 4px repeat-y,
		radial-gradient(#c4c4c4 1px, transparent 1.500px) 6px 16px / 4px 4px repeat-y;
}

.dots svg {
	width: 12px;
	height: 12px;
	display: block;
}

.beamright {
	flex: 1;
	min-width: 0;
	display: flex;
	flex-direction: column;
	padding-top: 3px;
}

.gridbar {
	flex: none;
	height: 26px;
	display: flex;
	align-items: center;
	gap: 10px;
	padding-left: 5px;
	background: linear-gradient(#fff, #f4f4f4);
	white-space: nowrap;
}

.gridbar .it { gap: 5px; margin-right: -3px; }

.gridbox {
	flex: 1;
	min-height: 0;
	border: 1px solid #b0b0b0;
	border-top: 0;
	border-right-width: 2px;
	border-bottom-width: 2px;
	background: #fff;
	display: flex;
	flex-direction: column;
}

.gridscroll {
	flex: 1;
	min-height: 0;
	overflow: hidden;
}

.grid {
	table-layout: fixed;
	border-collapse: collapse;
	width: 1183px;
	font-size: 12px;
}

.c31 { width: 31px; }
.c41 { width: 41px; }
.c60 { width: 60px; }
.c61 { width: 61px; }
.c62 { width: 62px; }
.c80 { width: 80px; }
.c81 { width: 81px; }
.c82 { width: 82px; }
.c150 { width: 150px; }

.grid th {
	height: 19px;
	padding: 0;
	font-weight: normal;
	color: #222;
	background: #fafafa;
	border: 1px solid #c8c8c8;
	white-space: nowrap;
	overflow: hidden;
}

.grid .hot {
	background: linear-gradient(#fae0a8, #f0c674);
	color: #6a1090;
}

.grid .hotsub {
	background: linear-gradient(#fdeccb, #f9dca4);
	color: #6a1090;
}

.grid td {
	height: 20px;
	padding: 0 0 0 2px;
	background: #a8caef;
	border: 1px solid #c4d4e4;
	white-space: nowrap;
	overflow: hidden;
	color: #222;
}

.grid .rowno {
	background: #fcd690;
	text-align: center;
	color: #6a1090;
	padding: 0;
	font-family: "Liberation Mono", monospace;
}

.grid .cur {
	background: #8fbfed;
	border: 3px solid #000;
	padding-left: 0;
	letter-spacing: 1px;
}

.grid .wide {
	letter-spacing: 1px;
}

.hscroll {
	flex: none;
	height: 16px;
	background: #eee;
	display: flex;
	align-items: center;
}

.sa {
	flex: none;
	width: 18px;
	text-align: center;
	font: bold 14px/14px "Liberation Sans", sans-serif;
	color: #333;
}

.thumb {
	flex: none;
	width: 547px;
	height: 100%;
	background: #ccc;
}

.sa.right {
	margin-left: auto;
}

/* status bar */
.status {
	flex: none;
	height: 20px;
	display: flex;
	gap: 2px;
	background: #eee;
}

.sb {
	flex: none;
	height: 19px;
	line-height: 17px;
	background: #f8f8f8;
	border: 1px solid #dcdcdc;
	white-space: nowrap;
	overflow: hidden;
	padding-left: 1px;
}

.s1 { width: 148px; }
.s2 { width: 78px; }
.s3 { width: 98px; }
.s4b { width: 48px; padding-left: 2px; }
.s5b { width: 914px; padding-left: 2px; }
.s6 { flex: 1; }

.status .m {
	line-height: 17px;
}

.arw {
	letter-spacing: -3px;
	margin-right: 3px;
}

/* task bar */
.taskbar {
	flex: none;
	height: 40px;
	background: #0b151b;
	display: flex;
	align-items: center;
	color: #fff;
}

.winlogo {
	flex: none;
	width: 16px;
	height: 16px;
	margin: 0 16px;
}

.search {
	flex: none;
	width: 344px;
	height: 40px;
	background: #333;
	display: flex;
	align-items: center;
	color: #999;
	font-size: 14px;
	padding-left: 9px;
}

.cortana {
	flex: none;
	width: 20px;
	height: 20px;
	border: 3px solid #ddd;
	border-radius: 50%;
	margin-right: 7px;
}

.search svg {
	width: 12px;
	height: 18px;
	margin-left: auto;
	margin-right: 15px;
}

.tasks {
	display: flex;
	padding-left: 1px;
}

.task {
	flex: none;
	width: 49px;
	height: 40px;
	display: flex;
	align-items: center;
	justify-content: center;
	position: relative;
}

.t-edge {
	margin-left: 4px;
}

.task svg {
	width: 24px;
	height: 24px;
}

.task.current {
	background: #39434a;
}

.task.under::after {
	content: "";
	position: absolute;
	left: 3px;
	right: 3px;
	bottom: 0;
	height: 2px;
	background: #77b7e8;
}

.task.current::after {
	left: 0;
	right: 0;
}

.tray {
	position: relative;
	flex: 1;
	display: flex;
	align-items: center;
	font-size: 12px;
}

.cpu {
	position: absolute;
	left: 131px;
	width: 60px;
	display: flex;
	flex-direction: column;
	align-items: center;
	line-height: 19px;
	color: #e8e8e8;
}

.tray svg {
	position: absolute;
}

.t1 { left: 205px; width: 12px; height: 8px; }
.t2 { left: 228px; width: 16px; height: 12px; }
.t3 { left: 253px; width: 14px; height: 14px; }
.t4 { left: 276px; width: 14px; height: 14px; }
.t5 { left: 327px; width: 16px; height: 16px; }

.ime {
	position: absolute;
	left: 299px;
	font-size: 14px;
	font-weight: bold;
}

.clock {
	position: absolute;
	left: 356px;
	width: 66px;
	display: flex;
	flex-direction: column;
	align-items: center;
	line-height: 19px;
	color: #e8e8e8;
}

.notify {
	position: absolute;
	left: 438px;
	top: -7px;
	width: 24px;
	height: 24px;
}

.notify svg {
	left: 0;
	top: 0;
	width: 16px;
	height: 16px;
}

.notify em {
	position: absolute;
	left: 7px;
	top: 7px;
	width: 17px;
	height: 17px;
	background: #333;
	border: 1px solid #888;
	border-radius: 50%;
	font: bold 11px/15px "Liberation Sans", sans-serif;
	text-align: center;
	color: #fff;
}

/* floating things */
.bubble {
	position: absolute;
	left: 1108px;
	top: -28px;
	width: 46px;
	height: 46px;
	border-radius: 50%;
	background: #45c760;
	border: 2px solid #e4ece4;
	box-shadow: 0 1px 5px #888;
	color: #fff;
	font: bold 11px "Liberation Sans", sans-serif;
	text-align: center;
	padding-top: 28px;
	line-height: 14px;
}

.imebar {
	position: absolute;
	left: 940px;
	top: 19px;
	width: 173px;
	height: 24px;
	background: #f4f8fd;
	border: 1px solid #b4c8dc;
	display: flex;
	align-items: center;
	gap: 0;
	padding-left: 21px;
}

.imebar::after {
	content: "";
	position: absolute;
	left: 26px;
	right: 28px;
	top: 23px;
	height: 2px;
	background: repeating-linear-gradient(90deg, #555 0 3px, transparent 3px 5px);
}

.slogo {
	position: absolute;
	left: -12px;
	top: -4px;
	width: 28px;
	height: 28px;
}

.ying {
	color: #2f74c4;
	font-size: 15px;
	font-weight: bold;
	line-height: 1;
}

.imebar svg:not(.slogo) {
	height: 16px;
	flex: none;
}

.i1 { width: 12px; margin-left: 9px; }
.i2 { width: 14px; margin-left: 9px; }
.i3 { width: 16px; margin-left: 7px; }
.i4 { width: 16px; margin-left: 8px; }
.i5 { width: 15px; margin-left: 5px; }
.i6 { width: 15px; margin-left: 7px; }

.overlay {
	position: absolute;
	left: 0;
	top: 0;
	width: 1366px;
	height: 768px;
	pointer-events: none;
}
```
